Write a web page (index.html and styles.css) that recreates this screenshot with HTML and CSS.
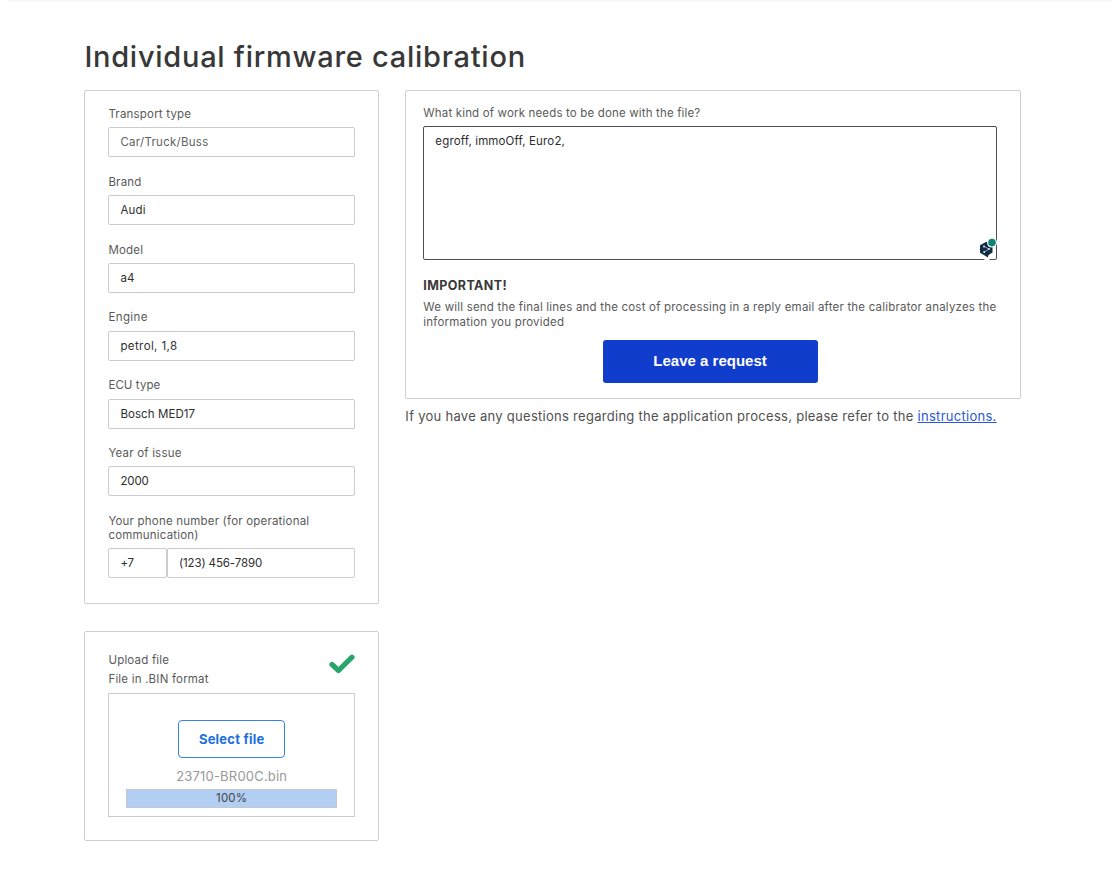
FILE: index.html
```html
<!DOCTYPE html>
<html lang="en">
<head>
<meta charset="utf-8">
<title>Individual firmware calibration</title>
<link rel="stylesheet" href="styles.css">
</head>
<body>
<div class="topline"></div>
<main class="page">
  <h1 class="title">Individual firmware calibration</h1>
  <div class="columns">
    <div class="left">
      <section class="card vehicle">
        <div class="field"><div class="label">Transport type</div><div class="input muted">Car/Truck/Buss</div></div>
        <div class="field"><div class="label">Brand</div><div class="input">Audi</div></div>
        <div class="field"><div class="label">Model</div><div class="input">a4</div></div>
        <div class="field"><div class="label wide">Engine</div><div class="input wide">petrol, 1,8</div></div>
        <div class="field"><div class="label tight">ECU type</div><div class="input tight">Bosch MED17</div></div>
        <div class="field"><div class="label">Year of issue</div><div class="input digits">2000</div></div>
        <div class="field"><div class="label">Your phone number (for operational<br>communication)</div>
          <div class="phone"><div class="input code digits">+7</div><div class="input number digits">(123) 456-7890</div></div>
        </div>
      </section>
      <section class="card upload">
        <div class="upload-head">
          <div class="upload-text"><span>Upload file</span><span>File in .BIN format</span></div>
          <svg class="check" viewBox="0 0 26 20"><path d="M3 10.5 L9.5 16.5 L23 3.2" fill="none" stroke="#29a56c" stroke-width="5.2" stroke-linecap="round" stroke-linejoin="round"/></svg>
        </div>
        <div class="drop">
          <button class="select">Select file</button>
          <div class="filename">23710-BR00C.bin</div>
          <div class="progress">100%</div>
        </div>
      </section>
    </div>
    <div class="right">
      <section class="card request">
        <div class="label question">What kind of work needs to be done with the file?</div>
        <div class="textarea">egroff, immoOff, Euro2,
          <svg class="badge" viewBox="0 0 22 24"><path d="M9.5 3.5 16 7.2 16 15.3 10.5 18.8 10.5 21.5 2.2 15.3 2.2 7.2Z" fill="#fff" stroke="#fff" stroke-width="4" stroke-linejoin="round"/><path d="M9.3 3.8 15.5 7.3V14.6L11.5 17 10.7 19.5 9 18.3 3 14.7V7.3Z" fill="#0f2b46"/><path d="M7 8.4 12 11.1 7.2 14" fill="none" stroke="#aebbc7" stroke-width=".8"/><g fill="#dce5ec"><circle cx="7" cy="8.4" r="1"/><circle cx="12" cy="11.1" r="1"/><circle cx="7.2" cy="14" r="1"/></g><circle cx="15" cy="4.6" r="5" fill="#fff"/><circle cx="15" cy="4.6" r="3.8" fill="#0c8577"/></svg>
        </div>
        <div class="important">IMPORTANT!</div>
        <p class="note">We will send the final lines and the cost of processing in a reply email after the calibrator analyzes the<br>information you provided</p>
        <button class="submit">Leave a request</button>
      </section>
      <p class="help">If you have any questions regarding the application process, please refer to the <a class="link" href="#">instructions.</a></p>
    </div>
  </div>
</main>
</body>
</html>
```
FILE: styles.css
```css
* { box-sizing: border-box; }
body { margin: 0; height: 871px; overflow: hidden; background: #fff; color: #5a5a5a; font: 11.5px/14.3px Inter, "Liberation Sans", sans-serif; letter-spacing: .2px; white-space: nowrap; }
.topline { height: 2px; margin: 0 8px; background: #f7f7f7; }
.page { padding: 36px 99px 0 84.4px; }
.title { margin: 0; height: 52.4px; font-size: 29px; line-height: 37px; font-weight: 500; letter-spacing: .73px; color: #383838; }
.columns { display: flex; align-items: flex-start; gap: 26.4px; }
.left { width: 294.6px; display: flex; flex-direction: column; gap: 27px; }
.right { width: 615.7px; }
.card { border: 1px solid #cfcfcf; border-radius: 2px; }
.vehicle { height: 513.6px; padding: 15.7px 23px 0; }
.field { margin-bottom: 17.5px; }
.label { padding-bottom: 6px; }
.tight { letter-spacing: .08px; }
.wide { letter-spacing: .4px; }
.input { height: 30px; padding: 0 11px; border: 1px solid #ccc; border-radius: 2px; line-height: 29px; color: #2e2e2e; }
.muted { color: #626262; letter-spacing: .27px; }
.digits { letter-spacing: -.12px; }
.phone { display: flex; }
.code { width: 58.5px; }
.number { flex: 1; }
.upload { height: 210px; padding: 20.7px 23px 0; }
.upload-head { display: flex; justify-content: space-between; height: 40px; }
.upload-text { display: flex; flex-direction: column; gap: 4.7px; }
.check { width: 26px; height: 20px; margin-top: 1px; }
.drop { height: 124px; padding: 26.2px 17px 0; border: 1px solid #ccc; display: flex; flex-direction: column; align-items: center; }
.select { width: 107px; height: 38px; padding: 0; border: 1px solid #3683e8; border-radius: 4px; background: #fff; color: #1b70df; font: 700 13px/20px Inter, sans-serif; letter-spacing: .22px; }
.filename { margin-top: 10px; font-size: 13px; line-height: 17px; color: #999; }
.progress { align-self: stretch; height: 19px; margin-top: 4px; border: 1px solid #bfc7d0; background: #b2cff3; color: #444; text-align: center; line-height: 17px; }
.request { height: 308.6px; padding: 14.3px 17px 0; }
.question { height: 20px; letter-spacing: .16px; }
.textarea { position: relative; width: 574px; height: 134px; padding: 7.2px 11px; border: 1px solid #4e4e4e; border-radius: 2px; color: #2e2e2e; letter-spacing: .14px; }
.badge { position: absolute; right: -3px; bottom: -3px; width: 22px; height: 24px; }
.important { margin-top: 18px; font-size: 12.5px; line-height: 16px; font-weight: 700; letter-spacing: .4px; color: #383838; }
.note { margin: 6.6px 0 0; }
.submit { display: block; width: 215px; height: 43px; margin: 11.2px 0 0 179.7px; padding: 0 1px 1px 0; border: 0; border-radius: 3px; background: #103dcc; color: #fff; font: 700 15px/20px "Liberation Sans", sans-serif; }
.help { margin: 8px 0 0; font-size: 13px; line-height: 18px; letter-spacing: .28px; color: #505050; }
.link { color: #2956d8; text-decoration: underline; }
```
